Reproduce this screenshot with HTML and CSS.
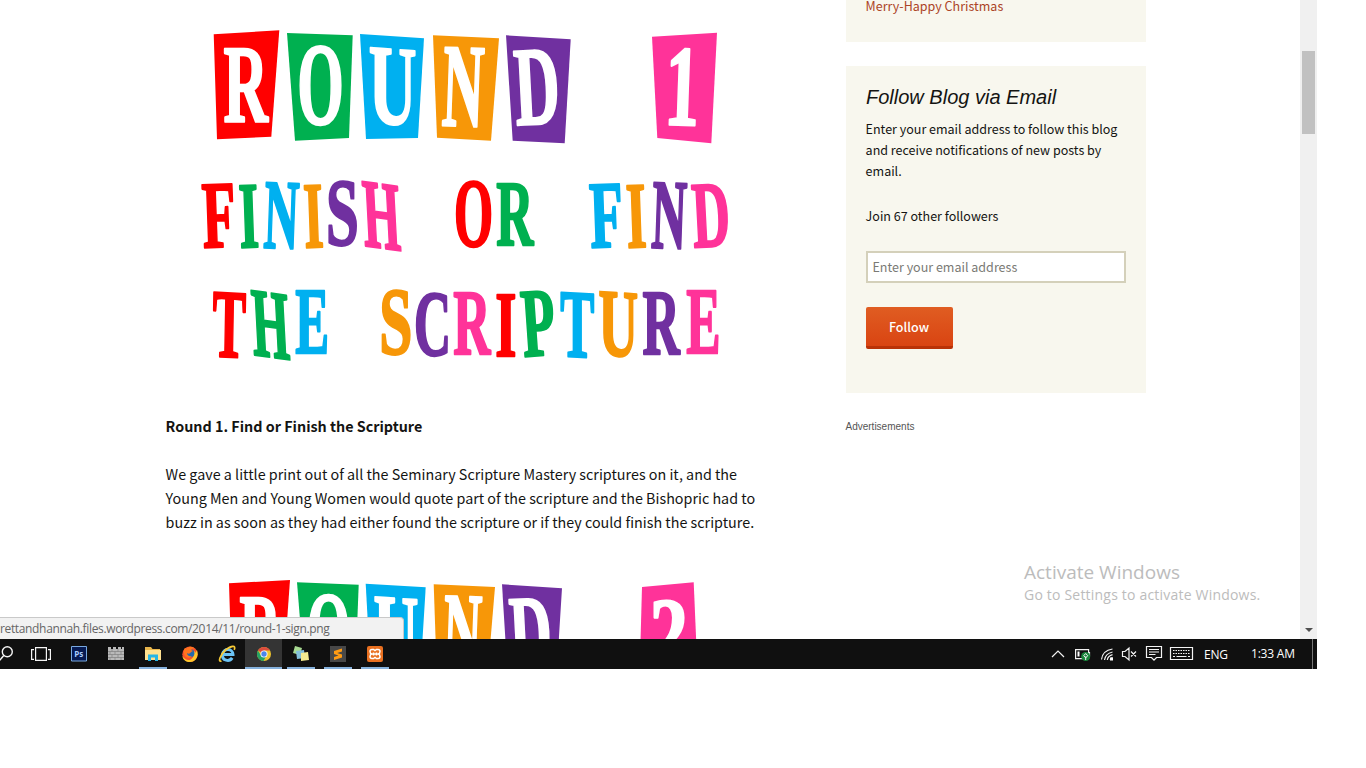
FILE: index.html
```
<!DOCTYPE html>
<html lang="en">
<head>
<meta charset="utf-8">
<title>Round 1. Find or Finish the Scripture</title>
<link rel="stylesheet" href="styles.css">
</head>
<body>
<div class="screen">
  <div class="viewport">
    <main class="post">
      <svg class="sign sign-one" id="sign-one" viewBox="166 0 600 390" role="img" aria-label="Round 1: Finish or Find the Scripture"></svg>
      <h2 class="post-heading">Round 1. Find or Finish the Scripture</h2>
      <p class="post-text">We gave a little print out of all the Seminary Scripture Mastery scriptures on it, and the<br>Young Men and Young Women would quote part of the scripture and the Bishopric had to<br>buzz in as soon as they had either found the scripture or if they could finish the scripture.</p>
      <svg class="sign sign-two" id="sign-two" viewBox="166 559 600 130" role="img" aria-label="Round 2"></svg>
    </main>
    <aside class="sidebar">
      <section class="widget recent"><a class="link">Merry-Happy Christmas</a></section>
      <section class="widget follow">
        <h3 class="widget-title">Follow Blog via Email</h3>
        <p class="widget-text">Enter your email address to follow this blog<br>and receive notifications of new posts by<br>email.</p>
        <p class="widget-text">Join 67 other followers</p>
        <input class="email" type="text" placeholder="Enter your email address">
        <button class="follow-button">Follow</button>
      </section>
      <div class="ads">Advertisements</div>
    </aside>
    <div class="scrollbar"><div class="thumb"></div><div class="arrow"></div></div>
    <div class="status">rettandhannah.files.wordpress.com/2014/11/round-1-sign.png</div>
    <div class="watermark"><div class="wm-title">Activate Windows</div><div class="wm-text">Go to Settings to activate Windows.</div></div>
  </div>
  <footer class="taskbar">
    <div class="apps">
      <div class="app search"><svg width="16" height="18" viewBox="0 0 16 18" fill="none" stroke="#f4f4f4" stroke-width="1.4"><circle cx="7.3" cy="6.700" r="5"/><path d="M3.800 10.500-.5 15.500"/></svg></div>
      <div class="app view"><svg width="22" height="18" viewBox="0 0 22 18" fill="none" stroke="#f4f4f4" stroke-width="1.2"><path d="M4.600 2.600h10.800v12.800H4.600zM3 4.600H.6v9.800H3M17 4.600h2.400v9.800H17"/></svg></div>
      <div class="app"><svg width="16" height="16" viewBox="0 0 16 16"><path d="M.5.5h15v14.500H.5z" fill="#061a52" stroke="#78a9e0"/><text x="3.2" y="11.2" class="ps">Ps</text></svg></div>
      <div class="app"><svg width="16" height="16" viewBox="0 0 16 16"><path d="M0 1h3v2h2V1h3v2h2V1h3v2h1V1h2v13H0z" fill="#b9b9b9"/><path d="M0 5.500h16M0 8.500h16M0 11.500h16M4 3v2.500M10 3v2.500M2 5.500v3M7 5.500v3M13 5.500v3M4 8.500v3M10 8.500v3M2 11.500V14M7 11.500V14M13 11.500V14" stroke="#777" stroke-width=".6"/></svg></div>
      <div class="app open explorer"><svg width="18" height="16" viewBox="0 0 18 16"><path d="M1 1h6l1.500 2H16v11H1z" fill="#e8b64c"/><path d="M1 4h16v10H1z" fill="#ffe190"/><path d="M4 8.500h10V15h-3v-3.500H7V15H4z" fill="#26b5e6"/></svg></div>
      <div class="app"><svg width="18" height="18" viewBox="0 0 18 18"><circle cx="9" cy="9.300" r="7.700" fill="#f9512c"/><path d="M16 5c2 6-1 12-7 12-4 0-7-2-7.600-6 3 5 8 5 10 2 2-2 1-5-1-7 2 0 4 0 4 2z" fill="#ffc62a"/><circle cx="9.400" cy="8.300" r="4" fill="#2469ad"/><path d="M5.500 3.600C8 1 12 1 14 4c-2-1-3 0-4 1l2 1-2 1c-1 2-3 2-4 1 0 2 2 4 5 3-2 3-7 2-8-2C2.500 6 3 4 4 3z" fill="#ff751e"/></svg></div>
      <div class="app"><svg width="18" height="18" viewBox="0 0 18 18" fill="none"><path d="M4.500 9.500H15c0-6-9.500-7-10.500-.2-.7 6.700 7 7.700 9.700 3.600" stroke="#6cc4f6" stroke-width="3"/><path d="M3.500 16C-.5 17.500 2 10 7.500 5 13 .8 18.500-.2 16.200 4.800" stroke="#f7ca36" stroke-width="1.700"/></svg></div>
      <div class="app open active"><svg width="16" height="16" viewBox="0 0 16 16"><circle cx="8" cy="8" r="7" fill="#efc42d"/><path d="M8 8 1.900 4.500A7 7 0 0 1 14.100 4.500H8z" fill="#dc4c3d"/><path d="M1.900 4.500A7 7 0 0 0 7.500 15l3-5.500H5z" fill="#25a365"/><circle cx="8" cy="8" r="3.500" fill="#fff"/><circle cx="8" cy="8" r="2.700" fill="#4b86ea"/></svg></div>
      <div class="app open"><svg width="18" height="18" viewBox="0 0 18 18"><path d="m3 1 7 2-2 7-7-2z" fill="#a7d991"/><path d="m4 6 8-1 1 8-8 1z" fill="#83c0db"/><path d="m9 8 7-1 1 8-8 1z" fill="#f5ec91"/></svg></div>
      <div class="app open"><svg width="16" height="16" viewBox="0 0 16 16"><path d="M0 0h16v16H0z" fill="#484848"/><path d="M12 2.500v3L7.200 7 12 8.500v3L4 14v-3l4.500-1.400L4 8V5z" fill="#ff9b13"/></svg></div>
      <div class="app open"><svg width="16" height="16" viewBox="0 0 16 16"><rect width="16" height="16" rx="2" fill="#e97020"/><path d="M5 3.500h1.500l1.500 1 1.500-1H11q2 0 2 2T11.200 8Q13 8.500 13 10.500t-2 2H9.500l-1.500-1-1.500 1H5q-2 0-2-2T4.800 8Q3 7.500 3 5.500t2-2zM6.500 6.500v3M9.500 6.500v3M6.500 8h3" fill="none" stroke="#fff" stroke-width="1.500"/></svg></div>
    </div>
    <div class="tray">
      <svg width="148" height="30" viewBox="1050 0 148 30" fill="none" stroke="#f3f3f3" stroke-width="1.200">
        <path d="m1052 18 6-6 6 6"/>
        <path d="M1075.600 10.600h13v9h-13zM1089.500 13v4"/><path d="M1077.500 12.500h2v5h-2z" fill="#fff" stroke="none"/>
        <circle cx="1085.700" cy="17.500" r="4.500" fill="#18863a" stroke="none"/><path d="M1085.700 21v-3.500M1085.700 14.500l2 2.200-2 2.200-2-2.200z" stroke-width="1"/>
        <path d="M1101.500 20.500q1-9 11-10.500M1104.500 21q1-6.500 8-8M1107.300 21q.5-4 5.200-5.300M1110.200 21q.3-2 2.300-2.500"/><path d="M1110 18.500h3v3h-3z" fill="#fff" stroke="none"/>
        <path d="M1122.500 12.500h2.500l4-3.500v12l-4-3.500h-2.500zM1131 12.500l5 5M1136 12.500l-5 5"/>
        <path d="M1146.500 7.500h15v11h-5l-2.500 2.700-2.500-2.700h-5zM1149 10.500h10M1149 13h10M1149 15.500h6.500"/>
        <path d="M1170.500 8.500h22v12h-22z"/><path d="M1173 11.500h17M1173 14.500h17" stroke-dasharray="1.500 1"/><path d="M1173 17.500h2M1176.500 17.500h10M1188 17.500h2"/>
      </svg>
      <span class="lang">ENG</span><span class="clock">1:33 AM</span><span class="desktop-edge"></span>
    </div>
  </footer>
</div>
<script src="signs.js"></script>
</body>
</html>
```
FILE: signs.js
```
const C = { r: '#ff0000', g: '#00b050', b: '#00b0f0', o: '#f79708', p: '#7030a0', k: '#ff3399', w: '#ffffff' };
const NS = 'http://www.w3.org/2000/svg';
const pen = document.createElement('canvas').getContext('2d');
pen.font = 'bold 100px "Liberation Serif"';

function tile(svg, color, points) {
  const el = document.createElementNS(NS, 'polygon');
  el.setAttribute('points', points);
  el.setAttribute('fill', C[color]);
  svg.appendChild(el);
}

// Stretches one letter so that its ink fills the box x1..x2, y1..y2.
function letter(svg, ch, color, x1, x2, y1, y2, rot = 0, skew = 0) {
  const m = pen.measureText(ch);
  const w = m.actualBoundingBoxRight + m.actualBoundingBoxLeft;
  const h = m.actualBoundingBoxAscent + m.actualBoundingBoxDescent;
  const edge = 1;
  const sx = (x2 - x1 - 2 * edge - Math.abs(rot) * 0.5) / w;
  const sy = (y2 - y1 - 2 * edge - Math.abs(skew) * 0.5) / h;
  const cx = (m.actualBoundingBoxRight - m.actualBoundingBoxLeft) / 2;
  const cy = (m.actualBoundingBoxDescent - m.actualBoundingBoxAscent) / 2;
  const el = document.createElementNS(NS, 'text');
  el.textContent = ch;
  el.setAttribute('class', 'glyph');
  el.setAttribute('fill', C[color]);
  el.setAttribute('stroke', C[color]);
  el.setAttribute('transform', `translate(${(x1 + x2) / 2} ${(y1 + y2) / 2}) rotate(${rot}) skewY(${skew}) scale(${sx} ${sy}) translate(${-cx} ${-cy})`);
  svg.appendChild(el);
}

const one = document.getElementById('sign-one');
[
  ['r', '213.7,34.3 279.3,30.3 271.3,136.7 217,139.3'],
  ['g', '287,33 352.7,35.3 349,138 295,140.7'],
  ['b', '360,34 424,38.3 418,138 366,139'],
  ['o', '433,35.3 499,38.3 491,140.7 437,137.7'],
  ['p', '506,35.3 570.7,39.3 564.7,143.3 512.7,140.7'],
  ['k', '652,36.7 717,32.7 711.3,143.3 657.3,138']
].forEach(t => tile(one, ...t));
[
  ['R', 'w', 223, 270, 49, 124.3], ['O', 'w', 298.7, 342, 46, 127], ['U', 'w', 369, 416, 48, 126.7, 0, 4],
  ['N', 'w', 441.7, 484.7, 48, 128.3, 2], ['D', 'w', 513.3, 558.7, 50, 126, -3], ['1', 'w', 669, 697.7, 48, 126, 2],
  ['F', 'r', 201.3, 235, 184.3, 249, -2], ['I', 'g', 239, 258.7, 185, 249, -2], ['N', 'b', 263, 299.7, 182.7, 250, 2],
  ['I', 'o', 303.7, 323.3, 185, 249, -2], ['S', 'p', 328, 357.7, 181, 248.3], ['H', 'k', 361.7, 401.3, 181, 253, -3, 11],
  ['O', 'r', 455, 491.7, 181, 249.3], ['R', 'g', 495.7, 535.3, 183.7, 247],
  ['F', 'b', 588.7, 622.3, 184.3, 249, -2], ['I', 'o', 626.3, 646.3, 185, 249, -2], ['N', 'p', 650.7, 687.3, 182.7, 250, 2],
  ['D', 'k', 691, 729.3, 184.3, 248.3, -3],
  ['T', 'r', 211.7, 246.7, 292.3, 359.3, 1, 2], ['H', 'g', 250.7, 290.3, 290, 362, -3, 11], ['E', 'b', 294.7, 327.7, 291.7, 356],
  ['S', 'o', 381.3, 411.3, 290, 357.3], ['C', 'p', 415, 448.3, 292.7, 358.3], ['R', 'k', 452.7, 492.3, 293, 356],
  ['I', 'r', 496, 516, 294.3, 358], ['P', 'g', 520, 555.7, 291, 357.3, -4], ['T', 'b', 559.7, 595, 292.3, 359.3, 0, 3],
  ['U', 'o', 598.7, 638, 291.7, 358.7, 0, 4], ['R', 'p', 642, 681.7, 293, 356], ['E', 'k', 685.7, 719, 291.7, 356]
].forEach(l => letter(one, ...l));

const two = document.getElementById('sign-two');
[
  ['r', '229,583.3 290,580 283,677 232,680'],
  ['g', '297,582.3 358.7,584.7 355,680 305,682'],
  ['b', '365.7,583.7 425.7,587.3 420,680 371,680'],
  ['o', '433.7,584.3 495,587 487,682 437,680'],
  ['p', '502,584.3 562,588.3 556,685 508,682'],
  ['k', '642,587 693.7,582.3 697,660 640,660']
].forEach(t => tile(two, ...t));
[
  ['R', 'w', 239, 283, 597.3, 667], ['O', 'w', 308, 348.6, 594.7, 670], ['U', 'w', 373.7, 418, 597, 670, 0, 4],
  ['N', 'w', 442.3, 482.3, 596.3, 671, 2], ['D', 'w', 508.7, 551, 598.5, 668, -3], ['2', 'w', 651.7, 686, 598.7, 668]
].forEach(l => letter(two, ...l));
```
FILE: styles.css
```
* { box-sizing: border-box; }
body { margin: 0; background: #fff; color: #141412; font-family: "Noto Sans CJK SC", "Open Sans", sans-serif; }
h2, h3, p { margin: 0; }
.screen { width: 1317px; height: 669px; overflow: hidden; }
.viewport { position: relative; display: flex; height: 639px; overflow: hidden; background: #fff; }
.post { flex: none; width: 680px; margin-left: 166px; }
.sign { display: block; width: 600px; }
.sign-one { height: 390px; }
.sign-two { height: 130px; margin-top: 25px; }
.glyph { font: bold 100px "Liberation Serif", serif; stroke-width: 2px; stroke-linejoin: round; vector-effect: non-scaling-stroke; }
.post-heading { margin-top: 24px; margin-left: -.4px; font-size: 14.330px; font-weight: 700; line-height: 24px; white-space: nowrap; }
.post-text { margin-top: 24px; margin-left: -.4px; font-size: 14.330px; line-height: 24px; white-space: nowrap; }
.sidebar { flex: none; width: 300px; }
.widget { display: flow-root; padding: 20px; background: #f8f7ee; font-size: 12.530px; line-height: 21px; }
.recent { height: 42px; padding-top: 0; }
.link { display: block; margin-top: -5px; margin-left: -.4px; color: #ac4427; }
.follow { height: 327px; margin-top: 24px; }
.widget-title { margin-bottom: 9px; font: italic 400 20px/23px "Liberation Sans", Arial, sans-serif; }
.widget-text { margin-bottom: 24px; margin-left: -.4px; white-space: nowrap; }
.email { display: block; width: 260px; height: 32px; margin-top: 25px; padding: 0 5px 1px 4.500px; border: 2px solid #d4d0ba; border-radius: 0; background: #fff; font: 12.530px "Noto Sans CJK SC", sans-serif; }
.email::placeholder { color: #7a7a75; opacity: 1; }
.follow-button { display: block; width: 87px; height: 42px; margin-top: 24px; padding: 0 1px 0 0; border: 0; border-bottom: 3px solid #b93207; border-radius: 2px; background: linear-gradient(#e05d22, #d94412); color: #fff; font: 500 12.530px "Noto Sans CJK SC", sans-serif; }
.ads { margin-top: 27px; margin-left: -.5px; font: 10px/14px "Liberation Sans", Arial, sans-serif; color: #555; }
.scrollbar { position: relative; flex: none; width: 17px; height: 639px; margin-left: 154px; padding: 51px 2px 0; background: #f0f0f0; }
.thumb { height: 83px; background: #c1c1c1; }
.arrow { position: absolute; left: 5px; bottom: 7px; border: 4px solid transparent; border-top-color: #505050; border-bottom: 0; }
.status { position: absolute; left: -2px; bottom: 0; width: 406px; height: 22px; padding-left: 1px; border: 1px solid #c9c9c9; border-bottom: 0; border-radius: 0 4px 0 0; background: #f2f2f2; color: #666; font: 12px/22px "Open Sans", "Noto Sans", sans-serif; letter-spacing: -.35px; white-space: nowrap; }
.watermark { position: absolute; left: 1024px; top: 560px; color: #bcbcbc; font-family: "Open Sans", "Noto Sans", sans-serif; white-space: nowrap; }
.wm-title { font-size: 19px; line-height: 24px; }
.wm-text { font-size: 14px; line-height: 21px; letter-spacing: .2px; }
.taskbar { display: flex; justify-content: space-between; height: 30px; background: #101010; color: #fff; }
.apps { display: flex; }
.app { display: flex; align-items: center; justify-content: center; width: 37px; height: 30px; }
.search { width: 23px; justify-content: flex-start; }
.open { background: linear-gradient(#86b2de, #86b2de) center bottom / 28px 2px no-repeat; }
.active { background: linear-gradient(#86b2de, #86b2de) center bottom / 100% 2px no-repeat #343434; }
.ps { fill: #a9cdff; font: bold 8px "Open Sans", sans-serif; }
.tray { display: flex; align-items: center; font: 12px "Open Sans", "Noto Sans", sans-serif; letter-spacing: -.2px; }
.lang { width: 53px; padding-left: 6px; }
.clock { width: 61px; margin-top: -2px; white-space: nowrap; }
.desktop-edge { width: 5px; height: 30px; border-left: 1px solid #777; }
```
